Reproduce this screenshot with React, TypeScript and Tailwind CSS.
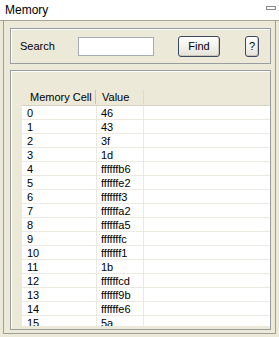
import React from 'react';

const cells: string[] = [
  '46', '43', '3f', '1d', 'ffffffb6', 'ffffffe2', 'fffffff3', 'ffffffa2',
  'ffffffa5', 'fffffffc', 'fffffff1', '1b', 'ffffffcd', 'ffffff9b', 'ffffffe6', '5a',
];

const XpButton: React.FC<{ label: string; className: string }> = ({ label, className }) => (
  <button
    className={`h-[21px] rounded-[3px] border border-[#3c4a5c] bg-gradient-to-b from-white to-[#e6e3d9] text-[11px] text-black leading-none shadow-[inset_-1px_-1px_0_#c9c5b8] ${className}`}
  >
    {label}
  </button>
);

const App: React.FC = () => {
  return (
    <div
      className="w-[279px] h-[337px] bg-[#ece9d8] overflow-hidden text-[11px] text-black"
      style={{ fontFamily: '"Liberation Sans", Arial, sans-serif' }}
    >
      {/* title */}
      <div className="h-[21px] bg-white border-b border-[#a7a59a] flex items-center justify-between pl-[5px] pr-[3px]">
        <span className="text-[12px] leading-none">Memory</span>
        <span className="w-[10px] h-[4px] border border-[#8a8a8a] mb-[5px]" />
      </div>

      <div className="mx-[3px] h-[313px] border-l border-r border-b border-[#a0a09a] pl-[6px] pr-[4px] pt-[7px] flex flex-col gap-[6px]">
        {/* search group */}
        <div className="h-[36px] border border-[#9a9d9f] shadow-[inset_1px_1px_0_#fff] flex items-center pl-[9px]">
          <span className="w-[58px]">Search</span>
          <input className="w-[76px] h-[19px] bg-white border border-[#a5acb5] outline-none" />
          <XpButton label="Find" className="w-[42px] ml-[24px]" />
          <XpButton label="?" className="w-[14px] ml-[25px]" />
        </div>

        {/* table group */}
        <div className="h-[260px] border border-[#9a9d9f] shadow-[inset_1px_1px_0_#fff] pl-[11px] pt-[18px] pb-[3px] flex flex-col overflow-hidden">
          <div className="flex-1 overflow-hidden flex flex-col">
            <div className="h-[17px] flex shrink-0 border-b border-[#d5d1c3] items-center">
              <div className="w-[74px] pl-[8px] h-[14px] border-r border-[#c7c3b4] leading-[14px]">Memory Cell</div>
              <div className="w-[48px] pl-[6px] h-[14px] border-r border-[#dcd8ca] leading-[14px]">Value</div>
            </div>
            <div className="flex-1 bg-white overflow-hidden">
              {cells.map((v, i) => (
                <div key={i} className="h-[14px] flex border-b border-[#ebe9e1]">
                  <div className="w-[75px] pl-[5px] border-r border-[#ebe9e1] leading-[14px]">{i}</div>
                  <div className="w-[47px] pl-[4px] border-r border-[#ebe9e1] leading-[14px]">{v}</div>
                </div>
              ))}
            </div>
          </div>
        </div>
      </div>
    </div>
  );
};

export default App;
